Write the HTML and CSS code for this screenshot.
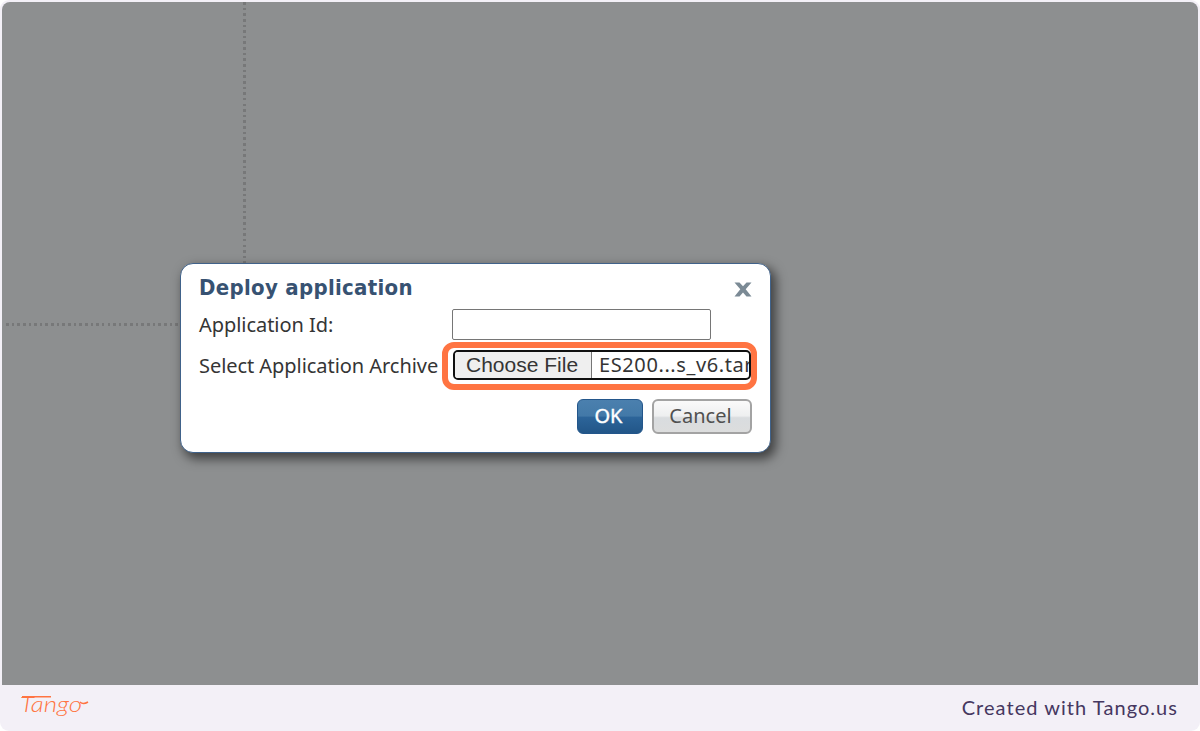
FILE: index.html
```
<!DOCTYPE html>
<html lang="en">
<head>
<meta charset="utf-8">
<title>Deploy application</title>
<link rel="stylesheet" href="styles.css">
</head>
<body>
<main class="frame">
  <section class="workspace">
    <div class="guide guide-vertical"></div>
    <div class="guide guide-horizontal"></div>
    <div class="dialog" role="dialog">
      <header class="dialog-header">
        <h1 class="title">Deploy application</h1>
        <svg class="close" viewBox="0 0 18 15"><path d="M.5.5H5.500L9 4.300 12.500.5H17.500L11.700 7.300 17.500 14.500H12.500L9 10.400 5.500 14.500H.5L6.300 7.300Z"/></svg>
      </header>
      <div class="row">
        <span class="label label-id">Application Id:</span>
        <input class="text-input" type="text">
      </div>
      <div class="row row-file">
        <span class="label label-archive">Select Application Archive</span>
        <div class="highlight">
          <div class="file-picker">
            <span class="choose">Choose File</span>
            <span class="file-name">ES200...s_v6.tar</span>
          </div>
        </div>
      </div>
      <div class="actions">
        <button class="button button-ok">OK</button>
        <button class="button button-cancel">Cancel</button>
      </div>
    </div>
  </section>
  <footer class="footer">
    <svg class="logo" viewBox="0 0 70 34">
      <path d="M3 3.700H32"/>
      <text x="1" y="19" textLength="62" lengthAdjust="spacingAndGlyphs">Tango</text>
      <path d="M61 9Q64 12 69 9"/>
    </svg>
    <span class="credit">Created with Tango.us</span>
  </footer>
</main>
</body>
</html>
```
FILE: styles.css
```
* { box-sizing: border-box; }
body { margin: 0; background: #fff; }
.frame {
  width: 1200px;
  height: 731px;
  padding: 2px 2px 0;
  display: flex;
  flex-direction: column;
  background: #f3f0f7;
  border-radius: 9px;
  overflow: hidden;
}
.workspace {
  position: relative;
  height: 683px;
  background: #8d8f90;
  border-radius: 8px 8px 0 0;
  overflow: hidden;
}
.guide { position: absolute; }
.guide-vertical {
  left: 241px;
  top: 0;
  width: 3px;
  height: 262px;
  background: repeating-linear-gradient(to bottom, #777879 0 2.600px, transparent 2.600px 5.640px);
}
.guide-horizontal {
  left: 4px;
  top: 321px;
  width: 175px;
  height: 3px;
  background: repeating-linear-gradient(to right, #777879 0 2.600px, transparent 2.600px 5.640px);
}
.dialog {
  position: absolute;
  left: 178px;
  top: 261px;
  width: 591px;
  height: 190px;
  padding: 8px 18px 0;
  display: flex;
  flex-direction: column;
  background: #fff;
  border: 1px solid #40628a;
  border-radius: 13px;
  box-shadow: 4px 5px 11px 1px rgba(0, 0, 0, .55);
  font-family: "Noto Sans", sans-serif;
  color: #353535;
}
.dialog-header {
  height: 35px;
  display: flex;
  justify-content: space-between;
}
.title {
  margin: 0;
  font: bold 22px/32px "DejaVu Sans Condensed", "DejaVu Sans", sans-serif;
  font-stretch: condensed;
  letter-spacing: .3px;
  color: #375272;
}
.close {
  width: 18px;
  height: 15px;
  margin: 10px 0 0;
  fill: #7b8a95;
}
.row {
  height: 36px;
  display: flex;
  align-items: flex-start;
}
.label {
  flex: none;
  width: 253px;
  font-size: 20px;
  line-height: 36px;
  letter-spacing: -.05px;
  white-space: nowrap;
}
.text-input {
  width: 259px;
  height: 31px;
  margin-top: 2px;
  border: 1px solid #767676;
  border-radius: 2px;
}
.row-file { height: 56px; }
.label-archive { width: 243px; line-height: 46px; }
.highlight {
  width: 315px;
  height: 48px;
  margin-top: -1px;
  flex: none;
  padding: 2px 0 0 5px;
  border: 6px solid #ff7442;
  border-radius: 12px;
}
.file-picker {
  width: 298px;
  height: 30px;
  display: flex;
  border: 2px solid #101010;
  border-radius: 5px;
  overflow: hidden;
  line-height: 25px;
  white-space: nowrap;
}
.choose {
  width: 137px;
  flex: none;
  padding-left: 11px;
  background: #efefef;
  border-right: 1px solid #767676;
  font-family: "Liberation Sans", Arial, sans-serif;
  font-size: 21px;
}
.file-name { padding-left: 7px; font-size: 20px; letter-spacing: .6px; }
.actions {
  display: flex;
  justify-content: flex-end;
  gap: 9px;
}
.button {
  height: 35px;
  padding: 0 0 2px;
  border-radius: 6px;
  font: 20px/30px "Noto Sans", sans-serif;
}
.button-ok {
  width: 66px;
  padding-right: 3px;
  border: 1px solid #23568b;
  background: linear-gradient(#4b80ae 0%, #4379a8 48%, #2c6499 53%, #225688 100%);
  color: #fff;
  -webkit-text-stroke: .4px #fff;
}
.button-cancel {
  width: 100px;
  padding-right: 3px;
  border: 2px solid #a3a3a3;
  background: linear-gradient(#fafafa 0%, #eeeff0 48%, #d9dcdf 54%, #dcdddd 100%);
  color: #505050;
}
.footer {
  height: 46px;
  padding: 0 20px 0 17px;
  display: flex;
  justify-content: space-between;
}
.logo {
  width: 70px;
  height: 34px;
  margin-top: 8px;
  overflow: visible;
  fill: none;
  stroke: #ff7442;
  stroke-width: 1.500;
}
.logo text {
  fill: #ff7442;
  stroke: none;
  font: italic 300 22px Lato, sans-serif;
}
.credit {
  font: 20px/44px Lato, sans-serif;
  letter-spacing: 1.05px;
  color: #453760;
}
```
